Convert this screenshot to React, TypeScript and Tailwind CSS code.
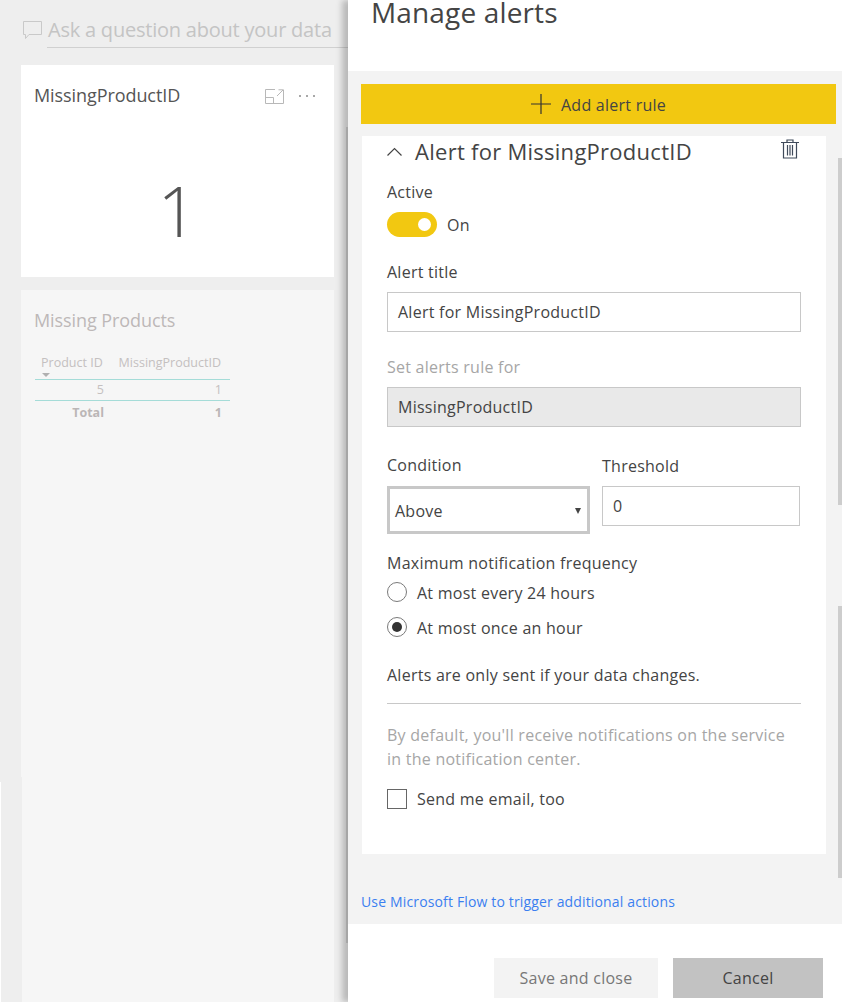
const font = { fontFamily: '"Open Sans", "Noto Sans", sans-serif' };

function TrashIcon() {
  return (
    <svg width="18" height="20" viewBox="0 0 18 20" fill="none" stroke="#3f4a5a" strokeWidth="1.2">
      <path d="M0 3.5h18M6 3.5V1h6v2.5M2.5 3.5V19h13V3.5M6.5 6v10.5M9 6v10.5M11.5 6v10.5" />
    </svg>
  );
}

function FocusIcon() {
  return (
    <svg width="19" height="15" viewBox="0 0 19 15" fill="none" stroke="#b8b8b8" strokeWidth="1">
      <path d="M10 .5H.5v14h18V5M.5 8.5h8v6M12 7l6-6M13.5 .8h5v5" />
    </svg>
  );
}

function ChatIcon() {
  return (
    <svg width="21" height="20" viewBox="0 0 21 20" fill="none" stroke="#c9c9c9" strokeWidth="1">
      <path d="M1.5 1.5h18v13H7l-3.5 4v-4h-2z" />
    </svg>
  );
}

function PlusIcon() {
  return (
    <svg width="20" height="20" viewBox="0 0 20 20" fill="none" stroke="#333333" strokeWidth="1.2">
      <path d="M0 10h20M10 0v20" />
    </svg>
  );
}

function ChevronIcon() {
  return (
    <svg width="15" height="9" viewBox="0 0 15 9" fill="none" stroke="#444444" strokeWidth="1.2">
      <path d="M.5 8.5l7-7 7 7" />
    </svg>
  );
}

function Radio({ checked, label }: { checked?: boolean; label: string }) {
  return (
    <div className="flex items-center h-[20px] gap-[10px]">
      <div className="w-[20px] h-[20px] rounded-full border border-[#7a7a7a] flex items-center justify-center bg-white">
        {checked && <div className="w-[10px] h-[10px] rounded-full bg-[#333333]" />}
      </div>
      <span className="text-[16px] leading-[20px] mt-[1px] tracking-[0.25px] text-[#444444]">{label}</span>
    </div>
  );
}

function Label({ children, muted }: { children: string; muted?: boolean }) {
  return (
    <div className={`text-[16px] leading-[20px] tracking-[0.25px] ${muted ? "text-[#a6a6a6]" : "text-[#444444]"}`}>
      {children}
    </div>
  );
}

export default function App() {
  return (
    <div className="w-[842px] h-[1002px] flex overflow-hidden bg-[#eeeeee] relative" style={font}>
      {/* dashboard behind the panel */}
      <div className="w-[348px] shrink-0 flex flex-col">
        <div className="h-[65px] pl-[22px] pt-[14px] flex">
          <div className="pt-[6px] pr-[4px]">
            <ChatIcon />
          </div>
          <div className="flex-1 h-[34px] border-b border-[#d0d0d0] pl-[1px] pt-[1px] text-[20px] leading-[30px] tracking-[-0.22px] text-[#c4c4c4] whitespace-nowrap overflow-hidden">
            Ask a question about your data
          </div>
        </div>
        <div className="ml-[21px] w-[313px] h-[212px] bg-white flex flex-col">
          <div className="flex items-center h-[60px] pl-[13px]">
            <span className="text-[18px] tracking-[-0.08px] text-[#555555]">MissingProductID</span>
            <div className="ml-auto mr-[19px] flex items-center gap-[14px] pt-[2px]">
              <div className="ml-[-1px] mr-[1px]">
                <FocusIcon />
              </div>
              <div className="flex gap-[5px]">
                <div className="w-[2px] h-[2px] bg-[#a8a8a8]" />
                <div className="w-[2px] h-[2px] bg-[#a8a8a8]" />
                <div className="w-[2px] h-[2px] bg-[#a8a8a8]" />
              </div>
            </div>
          </div>
          <div className="text-center text-[70px] leading-[70px] mt-[50px] font-light text-[#555555]">1</div>
        </div>
        <div className="ml-[21px] mt-[13px] w-[313px] flex-1 bg-[#f6f6f6] pl-[13px] pt-[17px]">
          <div className="text-[18px] leading-[26px] tracking-[-0.08px] text-[#bdb8b8]">Missing Products</div>
          <div className="w-[195px] ml-[1px] mt-[18px] text-[12.5px] text-[#c4c0c0]">
            <div className="h-[29px] border-b border-[#a5dcd8] flex justify-between pl-[6px] pr-[9px] relative pt-[3px]">
              <span>Product ID</span>
              <span>MissingProductID</span>
              <div className="absolute left-[7px] bottom-[2px] border-x-[4px] border-x-transparent border-t-[4px] border-t-[#b0b0b0]" />
            </div>
            <div className="h-[21px] border-b border-[#a5dcd8] flex items-center justify-between pr-[8px] pt-[1px]">
              <span className="w-[69px] text-right">5</span>
              <span>1</span>
            </div>
            <div className="h-[23px] flex items-center justify-between pr-[8px] pt-[1px] font-bold text-[#bbb6b6]">
              <span className="w-[69px] text-right">Total</span>
              <span>1</span>
            </div>
          </div>
        </div>
      </div>

      {/* manage alerts panel */}
      <div className="w-[494px] shrink-0 flex flex-col bg-white shadow-[-6px_0_6px_rgba(0,0,0,0.22)] relative">
        <div className="h-[71px] pl-[23px] shrink-0">
          <div className="text-[28px] leading-[24px] tracking-[0.15px] text-[#444444]">Manage alerts</div>
        </div>
        <div className="flex-1 bg-[#f3f3f3] pt-[13px] pl-[13px] flex flex-col">
          <div className="w-[475px] h-[40px] bg-[#f2c811] flex items-center justify-center gap-[10px] text-[16px] tracking-[0.25px] text-[#444444]">
            <PlusIcon />
            <span className="mt-[1px]">Add alert rule</span>
          </div>
          <div className="ml-[1px] mt-[12px] w-[464px] h-[718px] bg-white pl-[25px]">
            <div className="h-[31px] flex items-center relative">
              <ChevronIcon />
              <span className="ml-[13px] text-[22px] tracking-[0.27px] text-[#444444]">Alert for MissingProductID</span>
              <div className="absolute right-[27px] top-[3px]">
                <TrashIcon />
              </div>
            </div>
            <div className="mt-[15px]">
              <Label>Active</Label>
            </div>
            <div className="mt-[10px] flex items-center gap-[10px]">
              <div className="w-[50px] h-[25px] rounded-full bg-[#f2c811] flex items-center justify-end pr-[6px]">
                <div className="w-[13px] h-[13px] rounded-full bg-white" />
              </div>
              <span className="text-[16px] pt-[1px] tracking-[0.25px] text-[#444444]">On</span>
            </div>
            <div className="mt-[25px]">
              <Label>Alert title</Label>
            </div>
            <div className="mt-[10px] w-[414px] h-[40px] border border-[#c8c8c8] pl-[10px] flex items-center text-[16px] tracking-[0.25px] text-[#444444]">
              Alert for MissingProductID
            </div>
            <div className="mt-[25px]">
              <Label muted>Set alerts rule for</Label>
            </div>
            <div className="mt-[10px] w-[414px] h-[40px] border border-[#c8c8c8] bg-[#e9e9e9] pl-[10px] flex items-center text-[16px] tracking-[0.25px] text-[#444444]">
              MissingProductID
            </div>
            <div className="mt-[28px] flex gap-[12px]">
              <div className="w-[203px]">
                <Label>Condition</Label>
                <div className="mt-[11px] h-[48px] border-[3px] border-[#c8c8c8] pl-[5px] pr-[6px] pt-[1px] flex items-center justify-between text-[16px] tracking-[0.25px] text-[#444444]">
                  Above
                  <div className="border-x-[3.5px] border-x-transparent border-t-[6px] border-t-[#444444]" />
                </div>
              </div>
              <div className="w-[198px]">
                <div className="mt-[1px]">
                  <Label>Threshold</Label>
                </div>
                <div className="mt-[10px] h-[40px] border border-[#c8c8c8] pl-[10px] flex items-center text-[16px] text-[#444444]">
                  0
                </div>
              </div>
            </div>
            <div className="mt-[19px]">
              <Label>Maximum notification frequency</Label>
            </div>
            <div className="mt-[9px]">
              <Radio label="At most every 24 hours" />
            </div>
            <div className="mt-[15px]">
              <Radio checked label="At most once an hour" />
            </div>
            <div className="mt-[28px]">
              <Label>Alerts are only sent if your data changes.</Label>
            </div>
            <div className="mt-[18px] w-[414px] border-t border-[#c8c8c8]" />
            <div className="mt-[19px] w-[414px] text-[16px] leading-[24px] tracking-[0.25px] text-[#a6a6a6]">
              By default, you'll receive notifications on the service in the notification center.
            </div>
            <div className="mt-[17px] flex items-center gap-[10px]">
              <div className="w-[20px] h-[20px] border border-[#666666]" />
              <span className="text-[16px] leading-[20px] mt-[1px] tracking-[0.25px] text-[#444444]">Send me email, too</span>
            </div>
          </div>
          <div className="mt-[38px] text-[14px] leading-[20px] tracking-[0.15px] text-[#3b7ff0]">
            Use Microsoft Flow to trigger additional actions
          </div>
        </div>
        <div className="h-[78px] shrink-0 pt-[34px] pl-[146px] flex gap-[15px]">
          <div className="w-[164px] h-[40px] bg-[#f3f3f3] flex items-center justify-center text-[16px] tracking-[0.25px] text-[#777777]">
            Save and close
          </div>
          <div className="w-[150px] h-[40px] bg-[#c2c2c2] flex items-center justify-center text-[16px] tracking-[0.25px] text-[#444444]">
            Cancel
          </div>
        </div>
        {/* scrollbars */}
        <div className="absolute left-[-2px] top-[127px] w-[2px] h-[816px] bg-[#a6a6a6]" />
        <div className="absolute right-0 top-[158px] w-[4px] h-[347px] bg-[#cdcdcd]" />
        <div className="absolute right-0 top-[606px] w-[4px] h-[272px] bg-[#cdcdcd]" />
      </div>

      {/* screenshot seam at the bottom left */}
      <div className="absolute left-0 top-[782px] w-[1px] h-[220px] bg-white" />
      <div className="absolute left-[21px] top-[777px] w-[1px] h-[225px] bg-[#eeeeee]" />
    </div>
  );
}
